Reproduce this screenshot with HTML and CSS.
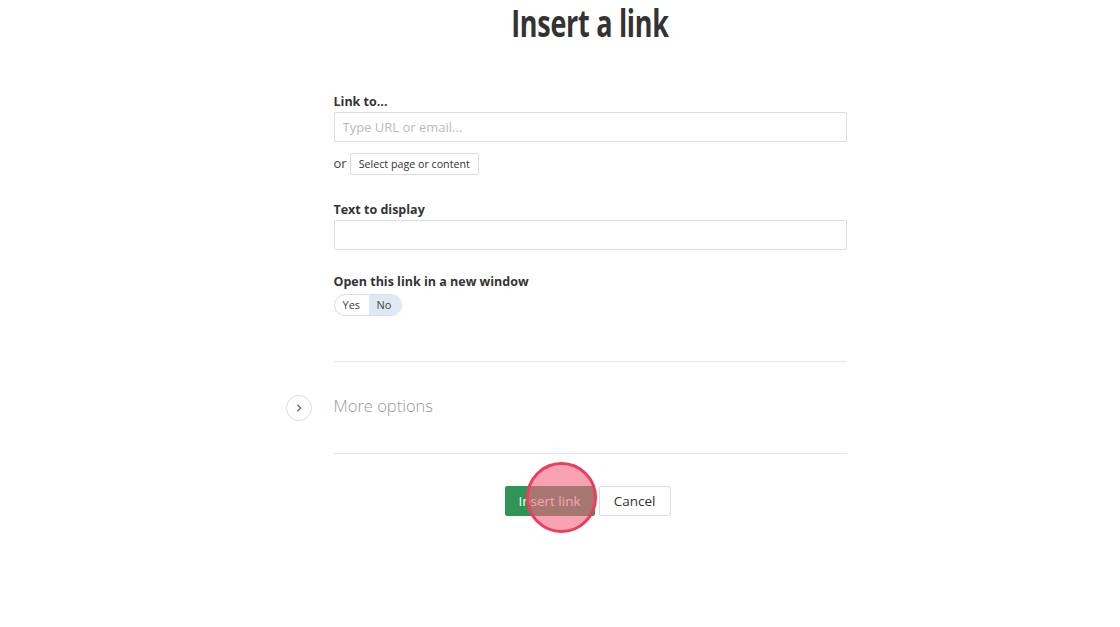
FILE: index.html
```html
<!DOCTYPE html>
<html>
<head>
<meta charset="utf-8">
<link rel="stylesheet" href="styles.css">
</head>
<body>
<div class="page">
  <div class="title-wrap"><h1 class="title">Insert a link</h1></div>
  <form class="form">
    <div class="field">
      <label class="label">Link to...</label>
      <input class="input" type="text" placeholder="Type URL or email...">
      <div class="or-row"><span class="or">or</span><button type="button" class="small-btn">Select page or content</button></div>
    </div>
    <div class="field field-text">
      <label class="label">Text to display</label>
      <input class="input" type="text">
    </div>
    <div class="field field-window">
      <label class="label">Open this link in a new window</label>
      <div class="toggle"><span class="opt">Yes</span><span class="opt active">No</span></div>
    </div>
    <div class="more">
      <span class="chev"><svg width="10" height="10" viewBox="0 0 10 10"><path d="M3.5 1.8 L6.6 5 L3.5 8.2" fill="none" stroke="#666" stroke-width="1.3"/></svg></span>
      <span class="more-text">More options</span>
    </div>
    <div class="actions">
      <button type="button" class="btn primary">Insert link</button>
      <button type="button" class="btn cancel">Cancel</button>
      <span class="click"></span>
    </div>
  </form>
</div>
</body>
</html>
```
FILE: styles.css
```css
* { box-sizing: border-box; }
html, body { margin: 0; padding: 0; background: #fff; }
body { font-family: "Open Sans", "Liberation Sans", sans-serif; color: #333; }
.page { width: 1120px; height: 627px; overflow: hidden; padding-left: 60px; }
.title-wrap { display: flex; justify-content: center; padding: 0 40px; }
.title {
  margin: 0; padding: 1px 20px 0;
  font-family: "Open Sans", "Liberation Sans", sans-serif;
  font-weight: 700;
  font-size: 38px;
  line-height: 42px;
  color: #333;
  letter-spacing: -0.4px;
  transform: scaleX(0.71);
  white-space: nowrap;
}
.form { width: 513px; margin: 0 auto; padding-top: 50px; }
.label { display: block; font-size: 12.5px; font-weight: 700; color: #333; line-height: 17px; margin-bottom: 2px; }
.input {
  display: block; width: 100%; height: 30px;
  border: 1px solid #ddd; border-radius: 1px;
  padding: 0 8px; font-family: inherit; font-size: 13px; color: #333;
  outline: none;
}
.input::placeholder { color: #bbb; }
.or-row { display: flex; align-items: center; margin-top: 11px; }
.or { font-size: 13px; color: #444; margin-right: 3px; position: relative; top: -1px; }
.small-btn {
  height: 22px; padding: 0 8px; border: 1px solid #ddd; border-radius: 2px;
  background: #fff; font-family: inherit; font-size: 10.7px; color: #333;
}
.field-text { margin-top: 26px; }
.field-window { margin-top: 23px; }
.toggle {
  display: inline-flex; height: 22px; border: 1px solid #ddd; border-radius: 11px; overflow: hidden;
}
.opt { display: flex; align-items: center; padding: 0 8px; font-size: 11px; color: #444; }
.opt:first-child { width: 34px; }
.opt.active { background: #dde9f4; width: 32px; }
.more {
  margin-top: 45px; border-top: 1px solid #e6e6e6; border-bottom: 1px solid #e6e6e6;
  height: 93px; display: flex; align-items: center; position: relative;
}
.chev {
  position: absolute; left: -48px; top: 33px;
  width: 26px; height: 26px; border: 1px solid #ddd; border-radius: 50%;
  display: flex; align-items: center; justify-content: center;
}
.more-text { font-size: 16.5px; font-weight: 300; color: #999; position: relative; top: -2px; }
.actions { display: flex; justify-content: center; gap: 4px; margin-top: 32px; position: relative; padding-right: 5px; }
.btn {
  height: 30px; padding: 0; border: 1px solid #ddd; border-radius: 2px; background: #fff;
  font-family: inherit; font-size: 13.5px; color: #333; white-space: nowrap;
}
.btn.primary { background: #2f9556; border-color: #2f9556; color: #fff; width: 90px; }
.btn.cancel { width: 72px; }
.click {
  position: absolute; left: 192px; top: -24px; width: 71px; height: 71px; border-radius: 50%;
  background: rgba(245, 100, 130, 0.6); border: 3px solid #ec3d5c;
}
```
